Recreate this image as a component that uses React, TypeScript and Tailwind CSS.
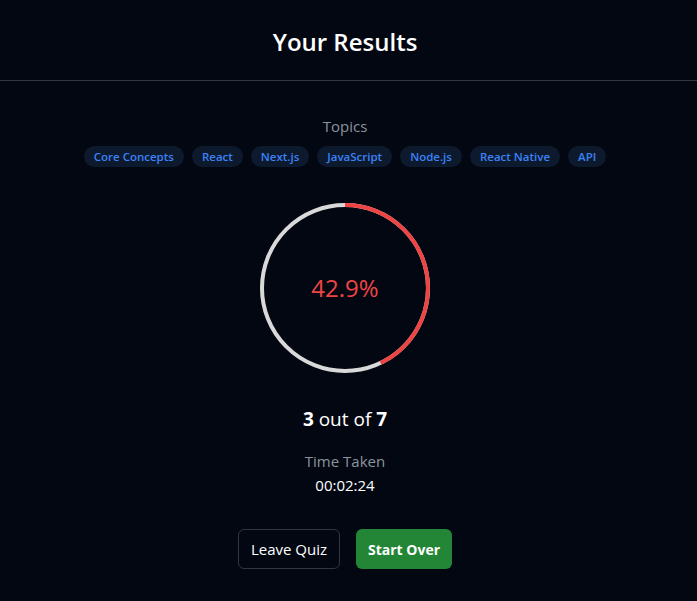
const topics = ["Core Concepts", "React", "Next.js", "JavaScript", "Node.js", "React Native", "API"];

function ScoreRing({ percent }: { percent: number }) {
  const r = 83;
  const c = 2 * Math.PI * r;
  return (
    <div className="relative w-[172px] h-[172px]">
      <svg width="172" height="172" viewBox="0 0 172 172" className="-rotate-90">
        <circle cx="86" cy="86" r={r} fill="none" stroke="#d9d9d9" strokeWidth="4" />
        <circle
          cx="86"
          cy="86"
          r={r}
          fill="none"
          stroke="#ef4444"
          strokeWidth="4"
          strokeDasharray={`${(c * percent) / 100} ${c}`}
        />
      </svg>
      <div className="absolute inset-0 flex items-center justify-center text-[24px] text-[#ef4444]">
        {percent.toFixed(1)}%
      </div>
    </div>
  );
}

export default function App() {
  return (
    <div className="min-h-[601px] bg-[#030712] text-white font-['Open_Sans',sans-serif]">
      <div className="h-[81px] pt-[4px] pr-[7px] flex items-center justify-center border-b border-[#30363d]">
        <h1 className="text-[24px] font-semibold">Your Results</h1>
      </div>

      <div className="flex flex-col items-center pt-[33px] pr-[7px]">
        <p className="text-[15px] text-[#8b949e] leading-[24px]">Topics</p>
        <div className="flex gap-2 mt-[8px]">
          {topics.map((t) => (
            <span
              key={t}
              className="h-[21px] px-[10px] flex items-center rounded-full bg-[#0d1a2e] text-[11.5px] font-semibold text-[#3b82f6]"
            >
              {t}
            </span>
          ))}
        </div>

        <div className="mt-[35px]">
          <ScoreRing percent={42.857} />
        </div>

        <p className="mt-[31px] text-[19px] leading-[28px]">
          <span className="font-bold">3</span> out of <span className="font-bold">7</span>
        </p>

        <p className="mt-[17px] text-[15px] text-[#8b949e] leading-[22px]">Time Taken</p>
        <p className="mt-[2px] text-[15px] leading-[22px]">00:02:24</p>

        <div className="flex gap-4 mt-[33px]">
          <button className="h-[40px] px-3 rounded-md border border-[#30363d] text-[15px]">Leave Quiz</button>
          <button className="h-[40px] px-3 rounded-md bg-[#238636] text-[14px] font-bold">Start Over</button>
        </div>
      </div>
    </div>
  );
}
